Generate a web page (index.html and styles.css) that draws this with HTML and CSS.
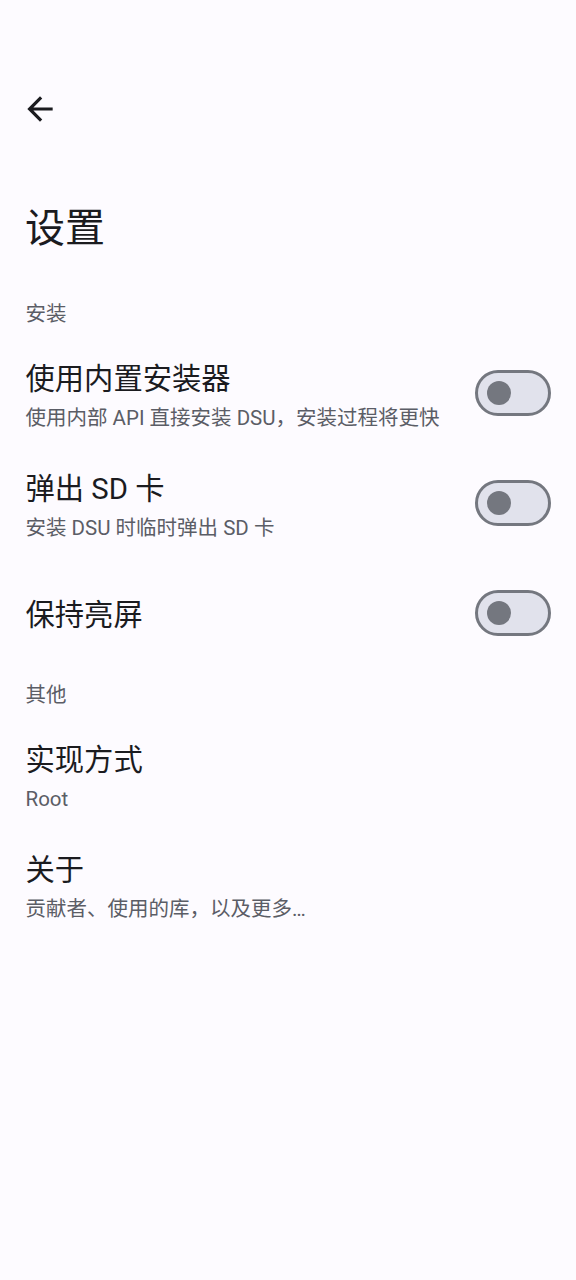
FILE: index.html
```html
<!DOCTYPE html>
<html lang="zh-CN">
<head>
<meta charset="utf-8">
<title>设置</title>
<link rel="stylesheet" href="styles.css">
</head>
<body>
<div class="screen">
  <header class="topbar">
    <button class="back" aria-label="返回">
      <svg viewBox="0 0 24 24" width="38" height="38"><path d="M20 11H7.83l5.59-5.59L12 4l-8 8 8 8 1.41-1.41L7.83 13H20v-2z"/></svg>
    </button>
  </header>
  <h1 class="page-title">设置</h1>

  <section class="group">
    <div class="group-label">安装</div>
    <div class="pref">
      <div class="pref-text">
        <div class="pref-title">使用内置安装器</div>
        <div class="pref-summary">使用内部 API 直接安装 DSU，安装过程将更快</div>
      </div>
      <span class="switch"><span class="thumb"></span></span>
    </div>
    <div class="pref">
      <div class="pref-text">
        <div class="pref-title">弹出 SD 卡</div>
        <div class="pref-summary">安装 DSU 时临时弹出 SD 卡</div>
      </div>
      <span class="switch"><span class="thumb"></span></span>
    </div>
    <div class="pref single">
      <div class="pref-text">
        <div class="pref-title">保持亮屏</div>
      </div>
      <span class="switch"><span class="thumb"></span></span>
    </div>
  </section>

  <section class="group">
    <div class="group-label">其他</div>
    <div class="pref">
      <div class="pref-text">
        <div class="pref-title">实现方式</div>
        <div class="pref-summary">Root</div>
      </div>
    </div>
    <div class="pref">
      <div class="pref-text">
        <div class="pref-title">关于</div>
        <div class="pref-summary">贡献者、使用的库，以及更多…</div>
      </div>
    </div>
  </section>
</div>
</body>
</html>
```

FILE: styles.css
```css
* { box-sizing: border-box; }

html, body {
  margin: 0;
  padding: 0;
  background: #fdfbff;
}

body {
  font-family: Roboto, "Noto Sans CJK SC", "Noto Sans", sans-serif;
  color: #1b1b1f;
  width: 576px;
  min-height: 1280px;
}

.screen {
  display: flex;
  flex-direction: column;
}

.topbar {
  padding: 90px 0 0 21px;
  height: 128px;
}

.back {
  display: block;
  width: 38px;
  height: 38px;
  padding: 0;
  margin: 0;
  border: 0;
  background: none;
}

.back svg {
  display: block;
  fill: #1b1b1f;
}

.page-title {
  margin: 75px 0 29px;
  padding: 0 25px;
  font-size: 40px;
  line-height: 52px;
  font-weight: 400;
}

.group {
  display: flex;
  flex-direction: column;
}

.group-label {
  padding: 15px 25.5px 14px;
  font-size: 20.5px;
  line-height: 30px;
  color: #5b5d66;
}

.pref {
  display: flex;
  align-items: center;
  padding: 14px 25px 18px 25.5px;
  min-height: 110px;
}

.pref.single {
  padding: 27px 25px 25.5px 25.5px;
  min-height: 96.5px;
}

.pref-text {
  flex: 1;
  display: flex;
  flex-direction: column;
}

.pref-title {
  font-size: 29.3px;
  line-height: 44px;
}

.pref-summary {
  font-size: 20.5px;
  line-height: 34px;
  color: #5b5d66;
}

.switch {
  flex: none;
  display: flex;
  align-items: center;
  width: 76px;
  height: 46px;
  padding-left: 9px;
  margin-bottom: 7px;
  border: 3px solid #74777f;
  border-radius: 23px;
  background: #e1e2ec;
}

.pref.single .switch {
  margin-bottom: 3px;
}

.thumb {
  width: 24px;
  height: 24px;
  border-radius: 50%;
  background: #74777f;
}
```
